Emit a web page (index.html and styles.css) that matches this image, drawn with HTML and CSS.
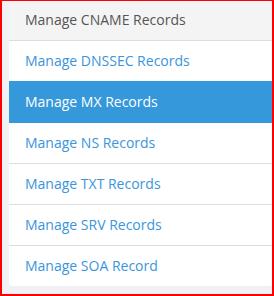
FILE: index.html
```html
<!DOCTYPE html>
<html lang="en">
<head>
    <meta charset="UTF-8">
    <meta name="viewport" content="width=device-width, initial-scale=1.0">
    <title>DNS Records</title>
    <link rel="stylesheet" href="styles.css">
</head>
<body>
    <div class="frame">
        <div class="list-group">
            <div class="list-item header">Manage CNAME Records</div>
            <a class="list-item" href="#">Manage DNSSEC Records</a>
            <a class="list-item active" href="#">Manage MX Records</a>
            <a class="list-item" href="#">Manage NS Records</a>
            <a class="list-item" href="#">Manage TXT Records</a>
            <a class="list-item" href="#">Manage SRV Records</a>
            <a class="list-item last" href="#">Manage SOA Record</a>
        </div>
    </div>
</body>
</html>
```

FILE: styles.css
```css
body {
    margin: 0;
    font-family: 'Open Sans', 'Noto Sans', sans-serif;
    font-size: 14px;
    background-color: #f0f0f5;
}

.frame {
    position: relative;
    height: 296px;
    padding-left: 9px;
    box-sizing: border-box;
    overflow: hidden;
}

/* red outline drawn over the page edge */
.frame::after {
    content: "";
    position: absolute;
    top: 0;
    left: 0;
    right: 0;
    bottom: 0;
    border-style: solid;
    border-color: #ff0000;
    border-width: 1px 2px 2px 2px;
}

.list-group {
    display: flex;
    flex-direction: column;
    background-color: #fff;
    border-radius: 0 0 4px 4px;
}

.list-item {
    display: block;
    padding: 10px 16px;
    line-height: 20px;
    border-bottom: 1px solid #dddddd;
    color: #3a95db;
    text-decoration: none;
}

.list-item.header {
    background-color: #f4f4f4;
    color: #555;
}

.list-item.active {
    margin-top: -1px;
    border-top: 1px solid #3498db;
    border-bottom-color: #3498db;
    background-color: #3498db;
    color: #fff;
}

.list-item.last {
    border-bottom: none;
    border-radius: 0 0 4px 4px;
}
```
